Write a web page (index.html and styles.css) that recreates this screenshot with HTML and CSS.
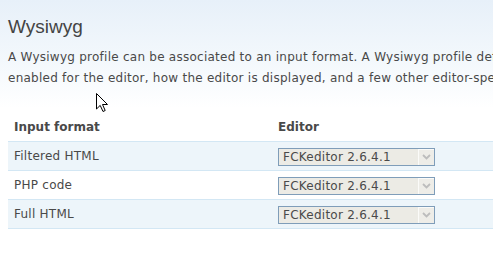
FILE: index.html
```html
<!DOCTYPE html>
<html>
<head>
<meta charset="utf-8">
<link rel="stylesheet" href="styles.css">
</head>
<body>
<div class="page">
  <h2 class="title">Wysiwyg</h2>
  <p class="intro">A Wysiwyg profile can be associated to an input format. A Wysiwyg profile defines which buttons or plugins are<br>enabled for the editor, how the editor is displayed, and a few other editor-specific functions.</p>
  <table class="formats">
    <thead>
      <tr><th class="col-format">Input format</th><th>Editor</th></tr>
    </thead>
    <tbody>
      <tr class="odd"><td>Filtered HTML</td><td><span class="select"><span class="value">FCKeditor 2.6.4.1</span><span class="btn"><svg width="9" height="6" viewBox="0 0 9 6"><polyline points="1,1 4.5,4.5 8,1" fill="none" stroke="#bdbdbd" stroke-width="1.8"/></svg></span></span></td></tr>
      <tr class="even"><td>PHP code</td><td><span class="select"><span class="value">FCKeditor 2.6.4.1</span><span class="btn"><svg width="9" height="6" viewBox="0 0 9 6"><polyline points="1,1 4.5,4.5 8,1" fill="none" stroke="#bdbdbd" stroke-width="1.8"/></svg></span></span></td></tr>
      <tr class="odd"><td>Full HTML</td><td><span class="select"><span class="value">FCKeditor 2.6.4.1</span><span class="btn"><svg width="9" height="6" viewBox="0 0 9 6"><polyline points="1,1 4.5,4.5 8,1" fill="none" stroke="#bdbdbd" stroke-width="1.8"/></svg></span></span></td></tr>
    </tbody>
  </table>
  <svg class="cursor" width="13" height="20" viewBox="0 0 13 20"><polygon points="0.5,0.5 0.5,16 4.2,12.4 7,18.5 9.2,17.5 6.5,11.5 11.5,11.5" fill="#fff" stroke="#000" stroke-width="1"/></svg>
</div>
</body>
</html>
```
FILE: styles.css
```css
html, body {
  margin: 0;
  padding: 0;
  overflow: hidden;
}
body {
  background: linear-gradient(#e7f0f9 0, #f3f8fc 60px, #ffffff 108px) no-repeat;
  background-color: #fff;
  color: #494949;
  font-family: "DejaVu Sans", Verdana, sans-serif;
  font-size: 12px;
  letter-spacing: 0.25px;
  min-height: 262px;
}
.page {
  position: relative;
  padding: 15px 0 0 8px;
  width: 800px;
}
.title {
  margin: 0 0 8px;
  font-family: "Liberation Sans", Arial, sans-serif;
  font-size: 19px;
  line-height: 24px;
  font-weight: normal;
  letter-spacing: 0;
  color: #444;
}
.intro {
  margin: 0;
  line-height: 21px;
  white-space: nowrap;
}
.formats {
  margin-top: 24px;
  border-collapse: collapse;
  width: 620px;
}
.formats th {
  text-align: left;
  font-weight: bold;
  line-height: 20px;
  padding: 4px 6px;
  letter-spacing: 0;
  border-bottom: 1px solid #d3e7f4;
}
.formats th.col-format {
  width: 252px;
}
.formats td {
  height: 29px;
  padding: 0 6px;
  box-sizing: border-box;
  vertical-align: middle;
  border-bottom: 1px solid #d3e7f4;
  line-height: 16px;
}
.formats tr.odd td {
  background: #edf5fa;
}
.formats tr.even td {
  background: #fff;
}
.select {
  display: flex;
  width: 157px;
  height: 18px;
  box-sizing: border-box;
  border: 1px solid #7f9db9;
  background: #ecebe5;
  margin-top: 1px;
}
.select .value {
  flex: 1;
  padding-left: 4px;
  color: #4a4a4a;
  line-height: 16px;
}
.select .btn {
  width: 16px;
  border-left: 1px solid #fbfbf9;
  border-top: 1px solid #fbfbf9;
  box-sizing: border-box;
  background: #eeede8;
  display: flex;
  align-items: center;
  justify-content: center;
}
.cursor {
  position: absolute;
  left: 96px;
  top: 93px;
}
```
